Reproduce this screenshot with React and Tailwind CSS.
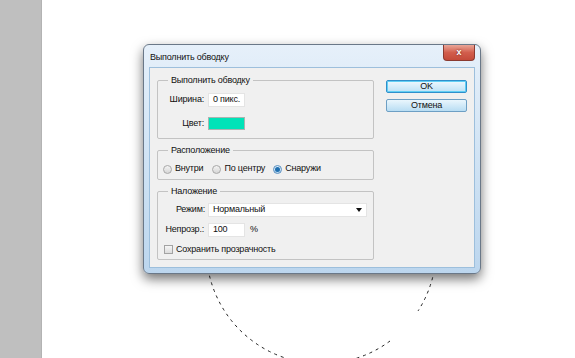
export default function App() {
  const Radio = ({ checked }) => (
    <span
      className={
        "w-[9px] h-[9px] rounded-full border flex items-center justify-center " +
        (checked
          ? "border-[#5a8fc0] bg-gradient-to-b from-[#dff0fb] to-[#b9d8ef]"
          : "border-[#a8a8a8] bg-gradient-to-b from-[#f4f4f4] to-[#d6d6d6]")
      }
    >
      {checked && <span className="w-[5px] h-[5px] rounded-full bg-[#1f6fb0]" />}
    </span>
  );

  return (
    <div className="relative flex w-[575px] h-[358px] overflow-hidden bg-white font-['Liberation_Sans',Arial,sans-serif] text-[9px] tracking-[-0.2px] text-[#111]">
      <div className="w-[42px] shrink-0 bg-[#bfbfbf] border-r border-[#b3b3b3]" />
      <div className="relative flex-1">
        <svg className="absolute left-0 top-0" width="533" height="358">
          <path d="M348 341 A115 115 0 1 1 376 311" fill="none" stroke="#222" strokeWidth="1" strokeDasharray="3 4" />
        </svg>

        <div className="absolute left-[101px] top-[44px] w-[338px] h-[230px] flex flex-col rounded-[6px] border border-[#6a7888] bg-gradient-to-b from-[#e6f0fa] via-[#d0e3f4] to-[#bcd6ee] px-[5px] pb-[5px] shadow-[0_5px_12px_rgba(0,0,0,0.55)]">
          <div className="relative h-[22px] flex items-center pt-[3px] pl-[1px]">
            <span>Выполнить обводку</span>
            <div className="absolute right-0 top-0 w-[32px] h-[16px] rounded-b-[4px] border border-t-0 border-[#8a3a30] bg-gradient-to-b from-[#e9a597] via-[#d25e4d] to-[#c44a3a] flex items-center justify-center">
              <span className="text-white font-bold text-[9px] leading-[9px] [text-shadow:0_0_2px_#5a1a10]">x</span>
            </div>
          </div>

          <div className="flex-1 flex items-start border border-[#9dbfdc] bg-[#f0f0f0] pl-[7px] pt-[6px]">
            <div className="w-[217px] flex flex-col gap-[5px]">
              <fieldset className="h-[65px] border border-[#c3c3c3] rounded-[2px]">
                <legend className="ml-[10px] px-[3px] leading-[12px]">Выполнить обводку</legend>
                <div className="mt-[7px] flex items-center h-[14px]">
                  <span className="w-[46px] text-right">Ширина:</span>
                  <div className="ml-[4px] w-[37px] h-[14px] bg-white border border-[#e4e4e4] pl-[4px] flex items-center">0 пикс.</div>
                </div>
                <div className="mt-[10px] flex items-center h-[13px]">
                  <span className="w-[46px] text-right">Цвет:</span>
                  <div className="ml-[4px] w-[37px] h-[13px] bg-[#00e3b8] border border-[#a9b4b1]" />
                </div>
              </fieldset>

              <fieldset className="h-[36px] border border-[#c3c3c3] rounded-[2px]">
                <legend className="ml-[10px] px-[3px] leading-[12px]">Расположение</legend>
                <div className="mt-[7px] ml-[5px] flex items-center h-[12px]">
                  <Radio />
                  <span className="ml-[3px]">Внутри</span>
                  <span className="ml-[9px]"><Radio /></span>
                  <span className="ml-[3px]">По центру</span>
                  <span className="ml-[8px]"><Radio checked /></span>
                  <span className="ml-[3px]">Снаружи</span>
                </div>
              </fieldset>

              <fieldset className="h-[75px] border border-[#c3c3c3] rounded-[2px]">
                <legend className="ml-[10px] px-[3px] leading-[12px]">Наложение</legend>
                <div className="mt-[6px] flex items-center h-[14px]">
                  <span className="w-[47px] text-right">Режим:</span>
                  <div className="ml-[3px] w-[159px] h-[14px] bg-white border border-[#e4e4e4] pl-[4px] pr-[4px] flex items-center justify-between">
                    <span>Нормальный</span>
                    <svg width="6" height="4" viewBox="0 0 6 4"><path d="M0 0H6L3 4Z" fill="#111" /></svg>
                  </div>
                </div>
                <div className="mt-[6px] flex items-center h-[14px]">
                  <span className="w-[46px] text-right">Непрозр.:</span>
                  <div className="ml-[4px] w-[37px] h-[14px] bg-white border border-[#e4e4e4] pl-[4px] flex items-center">100</div>
                  <span className="ml-[5px]">%</span>
                </div>
                <div className="mt-[8px] ml-[6px] flex items-center h-[9px]">
                  <span className="w-[9px] h-[9px] border border-[#a3a3a3] bg-gradient-to-b from-[#f6f6f6] to-[#dcdcdc]" />
                  <span className="ml-[3px]">Сохранить прозрачность</span>
                </div>
              </fieldset>
            </div>

            <div className="ml-[12px] mt-[6px] flex flex-col gap-[6px]">
              <div className="w-[81px] h-[13px] rounded-[2px] border border-[#2f8fcb] shadow-[inset_0_0_0_1px_#62cff4] bg-gradient-to-b from-[#eef8fe] to-[#bde2f6] flex items-center justify-center leading-[11px]">OK</div>
              <div className="w-[81px] h-[13px] rounded-[2px] border border-[#6d9fc4] bg-gradient-to-b from-[#eaf6fd] to-[#b8ddf3] flex items-center justify-center leading-[11px]">Отмена</div>
            </div>
          </div>
        </div>
      </div>
    </div>
  );
}
